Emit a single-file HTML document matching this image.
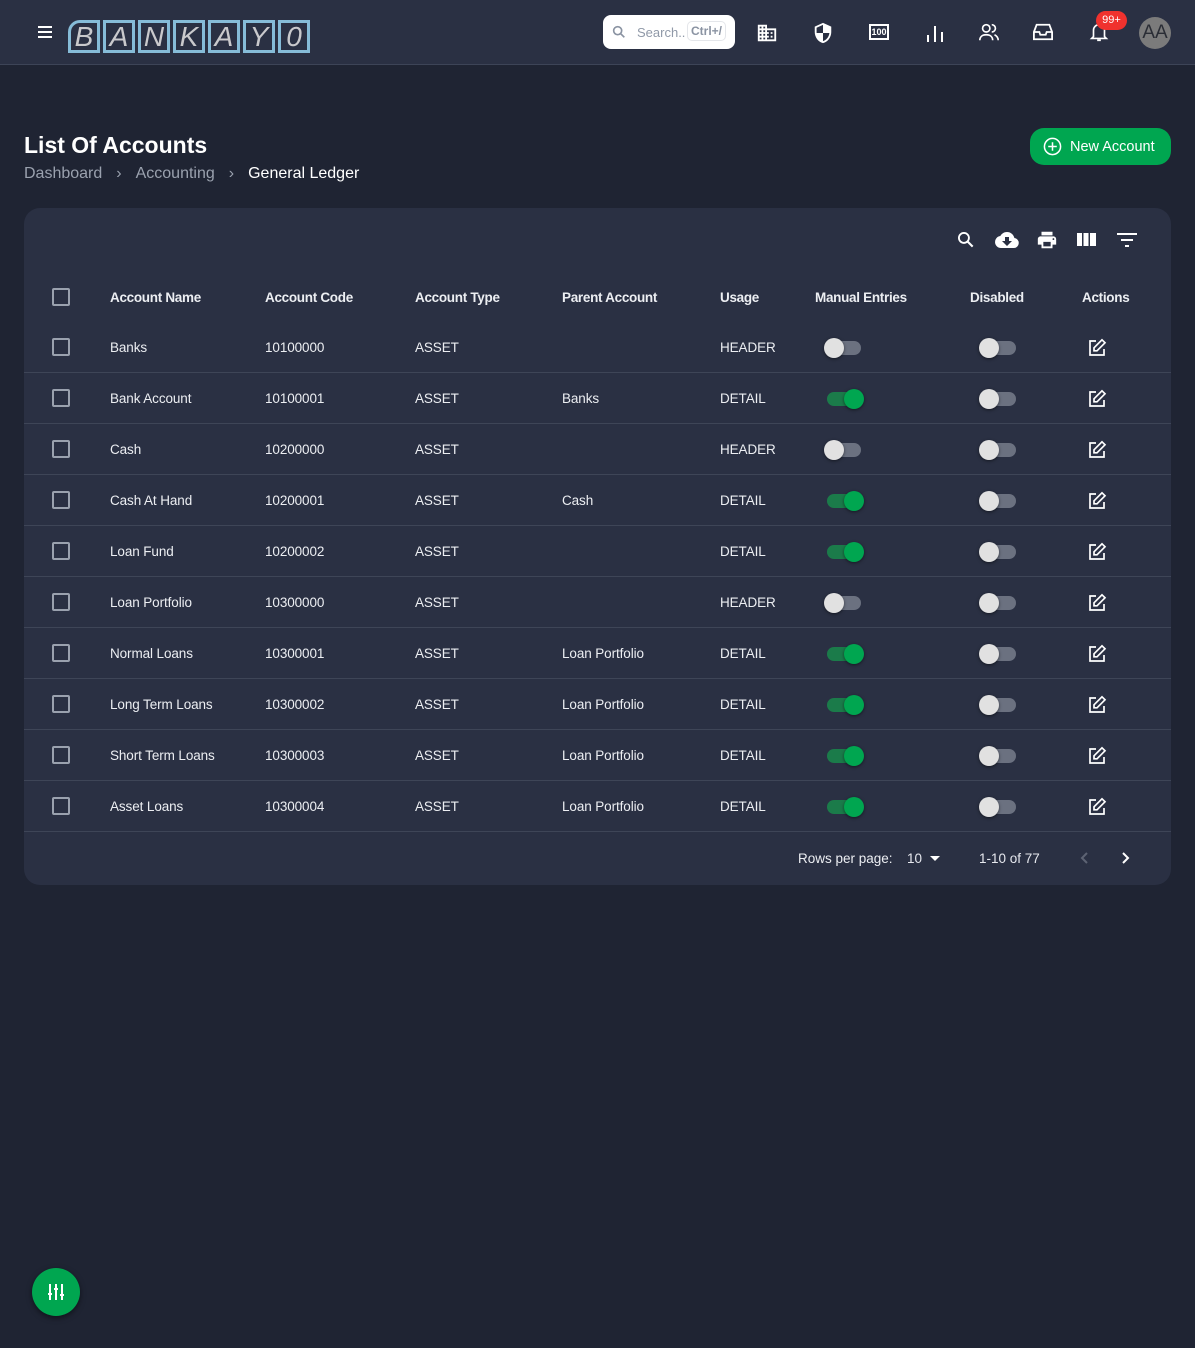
<!DOCTYPE html>
<html><head><meta charset="utf-8"><style>
*{box-sizing:border-box;margin:0;padding:0}
body{width:1195px;height:1348px;background:#1f2433;font-family:"Liberation Sans",sans-serif;color:#e6e8ee;position:relative;overflow:hidden}
.top{position:absolute;left:0;top:0;width:1195px;height:65px;background:#2a3043;border-bottom:1px solid #3d4457}
.abs{position:absolute}
.logo{position:absolute;top:20px;left:68px;display:flex;gap:3px}
.logo span{width:32px;height:33px;border:3px solid #86bcd8;color:#c9c9cc;font-style:italic;font-size:28px;display:flex;align-items:center;justify-content:center;background:#2a3043}
.logo span:first-child{border-radius:12px 0 0 0}
.search{position:absolute;left:603px;top:15px;width:132px;height:34px;background:#fff;border-radius:8px;font-size:13px;color:#9099a8}
.kbd{position:absolute;left:84px;top:6px;border:1px solid #e4e6ea;border-radius:5px;padding:2px 3px;font-size:12px;font-weight:bold;color:#8a93a2}
h1{position:absolute;left:24px;top:132px;font-size:23px;font-weight:600;color:#fff}
.bc{position:absolute;top:165px;left:24px;font-size:16px;color:#9aa1ae}
.btn{position:absolute;left:1030px;top:128px;width:141px;height:37px;background:#00a650;border-radius:14px;color:#fff;font-size:14.5px}
.card{position:absolute;left:24px;top:208px;width:1147px;height:677px;background:#2a3043;border-radius:16px}
.row{position:absolute;left:0;width:1147px;height:51px;font-size:13.5px;color:#eceef2;letter-spacing:-0.1px}
.row.b{border-bottom:1px solid #3e4557}
.row div{position:absolute;top:0;line-height:51px}
.cb{width:18px!important;height:18px;border:2px solid #9aa1ae;border-radius:2px;top:16px!important;left:28px}
.tg{width:34px!important;height:14px;border-radius:7px;top:19px!important}
.tg i{position:absolute;top:-3px;width:20px;height:20px;border-radius:50%;box-shadow:0 1px 3px rgba(0,0,0,.5)}
.off{background:#6b7180}.off i{left:-3px;background:#e1e1e1}
.on{background:#1b7b4a}.on i{left:17px;background:#00a650}
.hd{font-weight:bold;font-size:13.5px;letter-spacing:-0.3px}
</style></head><body>
<div class="top">
<div class="abs" style="left:38px;top:26px;width:14px;height:2px;background:#fff;box-shadow:0 5px 0 #fff,0 10px 0 #fff"></div>
<div class="logo"><span>B</span><span>A</span><span>N</span><span>K</span><span>A</span><span>Y</span><span>0</span></div>
<div class="search"><svg class="abs" style="left:8px;top:9px" width="16" height="16" viewBox="0 0 24 24"><circle cx="10" cy="10" r="6" fill="none" stroke="#8a93a2" stroke-width="2.5"/><path d="M14.5 14.5L20 20" stroke="#8a93a2" stroke-width="2.5"/></svg><span class="abs" style="left:34px;top:10px">Search..</span><span class="kbd">Ctrl+/</span></div>
<svg class="abs" style="left:756px;top:22px" width="22" height="22" viewBox="0 0 24 24" fill="#fff"><path d="M12 7V3H2v18h20V7H12zM6 19H4v-2h2v2zm0-4H4v-2h2v2zm0-4H4V9h2v2zm0-4H4V5h2v2zm4 12H8v-2h2v2zm0-4H8v-2h2v2zm0-4H8V9h2v2zm0-4H8V5h2v2zm10 12h-8v-2h2v-2h-2v-2h2v-2h-2V9h8v10zm-2-8h-2v2h2v-2zm0 4h-2v2h2v-2z"/></svg>
<svg class="abs" style="left:812px;top:21px" width="22" height="24" viewBox="0 0 24 24" fill="#fff"><path d="M12 1L3 5v6c0 5.5 3.8 10.7 9 12 5.2-1.3 9-6.5 9-12V5l-9-4zm0 11h7c-.5 4.1-3.3 7.8-7 8.9V12H5V6.3l7-3.1V12z"/></svg>
<div class="abs" style="left:869px;top:24px;width:20px;height:16px;border:2px solid #fff;font-size:9px;font-weight:bold;line-height:12px;text-align:center;color:#fff">100</div>
<svg class="abs" style="left:925px;top:22px" width="20" height="20"><path d="M3 13v7M10 4v16M17 10v10" stroke="#fff" stroke-width="2"/></svg>
<svg class="abs" style="left:978px;top:21px" width="22" height="22" viewBox="0 0 24 24" fill="none" stroke="#fff" stroke-width="1.8"><circle cx="9" cy="8" r="4"/><path d="M2 21c0-4 3-6 7-6s7 2 7 6M15 4a4 4 0 010 8M18 15c2 1 4 3 4 6"/></svg>
<svg class="abs" style="left:1032px;top:22px" width="22" height="20" viewBox="0 0 24 22" fill="none" stroke="#fff" stroke-width="2"><path d="M2 11L5 3h14l3 8v8H2z M2 11h6l1 3h6l1-3h6"/></svg>
<svg class="abs" style="left:1088px;top:20px" width="22" height="24" viewBox="0 0 24 24" fill="none" stroke="#fff" stroke-width="1.8"><path d="M6 17V10a6 6 0 0112 0v7l2 2H4zM10 21h4"/></svg>
<div class="abs" style="left:1096px;top:11px;width:31px;height:19px;background:#f0322e;border-radius:10px;font-size:11px;text-align:center;line-height:19px;color:#fff">99+</div>
<div class="abs" style="left:1139px;top:17px;width:32px;height:32px;border-radius:50%;background:#7b7b7b;color:#2a2d35;font-size:19px;text-align:center;line-height:32px">AA</div>
</div>
<h1>List Of Accounts</h1>
<div class="bc">Dashboard<span style="margin:0 14px 0 14px">›</span>Accounting<span style="margin:0 14px">›</span><span style="color:#fff">General Ledger</span></div>
<div class="btn"><svg class="abs" style="left:13px;top:9px" width="19" height="19" viewBox="0 0 20 20" fill="none" stroke="#fff" stroke-width="1.6"><circle cx="10" cy="10" r="8.5"/><path d="M10 5.5v9M5.5 10h9"/></svg><span class="abs" style="left:40px;top:11px">New Account</span></div>
<div class="card">
<svg class="abs" style="left:932px;top:22px" width="20" height="20" viewBox="0 0 24 24"><circle cx="9.5" cy="9.5" r="6" fill="none" stroke="#fff" stroke-width="2.2"/><path d="M14 14l6 6" stroke="#fff" stroke-width="2.5"/></svg>
<svg class="abs" style="left:970px;top:20px" width="26" height="24" viewBox="0 0 24 24" fill="#fff"><path d="M19.35 10.04A7.490 7.490 0 0012 4C9.11 4 6.6 5.64 5.35 8.04A6 6 0 006 20h13a5 5 0 00.35-9.96zM17 13l-5 5-5-5h3V9h4v4h3z"/></svg>
<svg class="abs" style="left:1012px;top:20px" width="22" height="24" viewBox="0 0 24 24" fill="#fff"><path d="M19 8H5c-1.66 0-3 1.34-3 3v6h4v4h12v-4h4v-6c0-1.66-1.34-3-3-3zm-3 11H8v-5h8v5zm3-7a1 1 0 110-2 1 1 0 010 2zm-1-9H6v4h12V3z"/></svg>
<svg class="abs" style="left:1053px;top:23px" width="20" height="18" viewBox="0 0 20 18" fill="#fff"><rect x="0" y="2" width="5" height="13"/><rect x="6.5" y="2" width="5" height="13"/><rect x="13" y="2" width="6" height="13"/></svg>
<svg class="abs" style="left:1093px;top:23px" width="20" height="18" fill="#fff"><rect x="0" y="2" width="20" height="2"/><rect x="4" y="8" width="12" height="2"/><rect x="8" y="14" width="4" height="2"/></svg>
<div class="row hd" style="top:64px"><div class="cb"></div><div style="left:86px">Account Name</div><div style="left:241px">Account Code</div><div style="left:391px">Account Type</div><div style="left:538px">Parent Account</div><div style="left:696px">Usage</div><div style="left:791px">Manual Entries</div><div style="left:946px">Disabled</div><div style="left:1058px">Actions</div></div>
<div id="rows"></div>
<div class="abs" style="left:774px;top:643px;font-size:13.5px;color:#eceef2">Rows per page:</div>
<div class="abs" style="left:883px;top:643px;font-size:13.5px">10</div>
<div class="abs" style="left:906px;top:648px;border:5px solid transparent;border-top-color:#fff"></div>
<div class="abs" style="left:955px;top:643px;font-size:13.5px">1-10 of 77</div>
<svg class="abs" style="left:1055px;top:643px" width="12" height="14"><path d="M8 2L3 7l5 5" fill="none" stroke="#5d6373" stroke-width="2"/></svg>
<svg class="abs" style="left:1095px;top:643px" width="12" height="14"><path d="M4 2l5 5-5 5" fill="none" stroke="#fff" stroke-width="2"/></svg>
</div>
<div class="abs" style="left:32px;top:1268px;width:48px;height:48px;border-radius:50%;background:#00a650;box-shadow:0 2px 6px rgba(0,0,0,.5)"><svg class="abs" style="left:15px;top:15px" width="18" height="18" fill="none" stroke="#fff" stroke-width="2"><path d="M3 1v16M9 1v16M15 1v16M1 11h4M7 6h4M13 12h4"/></svg></div>
<script>
var d=[["Banks","10100000","","HEADER",0],["Bank Account","10100001","Banks","DETAIL",1],["Cash","10200000","","HEADER",0],["Cash At Hand","10200001","Cash","DETAIL",1],["Loan Fund","10200002","","DETAIL",1],["Loan Portfolio","10300000","","HEADER",0],["Normal Loans","10300001","Loan Portfolio","DETAIL",1],["Long Term Loans","10300002","Loan Portfolio","DETAIL",1],["Short Term Loans","10300003","Loan Portfolio","DETAIL",1],["Asset Loans","10300004","Loan Portfolio","DETAIL",1]];
var h="";d.forEach(function(r,i){h+='<div class="row b" style="top:'+(114+i*51)+'px"><div class="cb"></div><div style="left:86px">'+r[0]+'</div><div style="left:241px">'+r[1]+'</div><div style="left:391px">ASSET</div><div style="left:538px">'+r[2]+'</div><div style="left:696px">'+r[3]+'</div><div class="tg '+(r[4]?'on':'off')+'" style="left:803px"><i></i></div><div class="tg off" style="left:958px"><i></i></div><div style="left:1063px;top:16px;line-height:0"><svg width="20" height="20" viewBox="0 0 20 20" fill="none" stroke="#fff" stroke-width="1.7"><path d="M9 3H3v14h14v-6"/><path d="M15 1.8l3 3-8 8H7v-3z"/></svg></div></div>'});
document.getElementById("rows").innerHTML=h;
</script>
</body></html>
